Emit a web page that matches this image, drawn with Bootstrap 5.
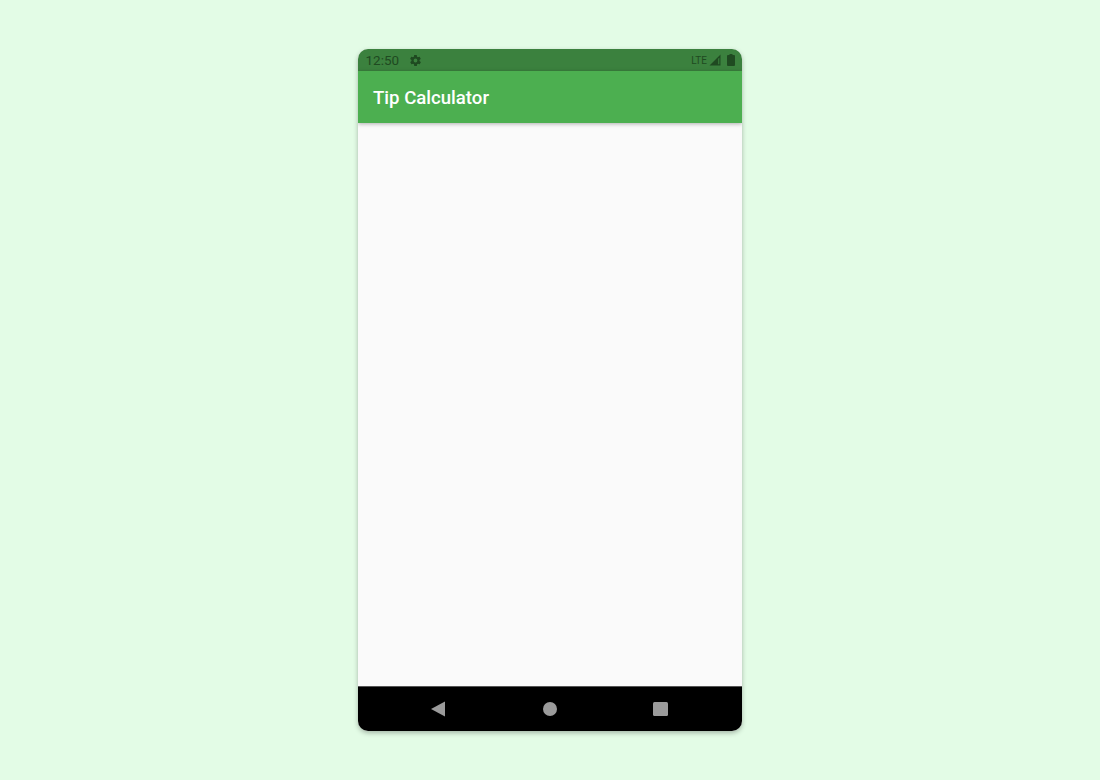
<!DOCTYPE html>
<html lang="en">
<head>
<meta charset="utf-8">
<title>Tip Calculator</title>
<link href="https://cdn.jsdelivr.net/npm/bootstrap@5.3.0/dist/css/bootstrap.min.css" rel="stylesheet">
<style>
html, body { height: 100%; }
body { background: #e3fce6; font-family: Roboto, "Liberation Sans", sans-serif; }
.stage { height: 780px; padding-top: 49px; }
.phone { width: 384px; height: 682px; border-radius: 10px; overflow: hidden; background: #fafafa; box-shadow: 0 2px 5px rgba(0,0,0,.28); }
.statusbar { height: 22px; background: #3b813e; color: #1f4a21; padding: 0 7px 0 7.5px; flex: none; }
.clock { font-size: 13.5px; line-height: 22px; margin-right: 10px; }
.lte { font-size: 10px; line-height: 22px; margin-right: 2px; padding-top: 1px; }
.sig { margin-right: 6px; }
.appbar { height: 52px; background: #4caf50; color: #fff; padding-left: 15px; padding-top: 3px; font-size: 18.6px; font-weight: 500; box-shadow: 0 1px 4px rgba(0,0,0,.3); flex: none; position: relative; }
.content { background: #fafafa; }
.navkeys { height: 45px; background: #000; border-top: 1px solid #555; flex: none; padding: 0 74px 0 72.5px; }
.homekey { margin-left: 2px; }
</style>
</head>
<body>
<div class="stage d-flex justify-content-center">
  <div class="phone d-flex flex-column">
    <div class="statusbar d-flex align-items-center">
      <span class="clock">12:50</span>
      <svg width="13" height="13" viewBox="0 0 24 24" fill="#1f4a21" aria-hidden="true"><path d="M19.4 13a7.5 7.5 0 0 0 0-2l2.1-1.6a.5.5 0 0 0 .1-.7l-2-3.4a.5.5 0 0 0-.6-.2l-2.5 1a7.3 7.3 0 0 0-1.7-1l-.4-2.7a.5.5 0 0 0-.5-.4h-4a.5.5 0 0 0-.5.4l-.4 2.7a7.3 7.3 0 0 0-1.7 1l-2.5-1a.5.5 0 0 0-.6.2l-2 3.4a.5.5 0 0 0 .1.7L4.6 11a7.5 7.5 0 0 0 0 2l-2.1 1.6a.5.5 0 0 0-.1.7l2 3.4c.1.2.4.3.6.2l2.5-1c.5.4 1.1.7 1.7 1l.4 2.7c0 .2.2.4.5.4h4c.3 0 .5-.2.5-.4l.4-2.7c.6-.3 1.2-.6 1.7-1l2.5 1c.2.1.5 0 .6-.2l2-3.4a.5.5 0 0 0-.1-.7zM12 15.5a3.5 3.5 0 1 1 0-7 3.5 3.5 0 0 1 0 7z"/></svg>
      <span class="lte ms-auto">LTE</span>
      <svg class="sig" width="12" height="12" viewBox="0 0 12 12" aria-hidden="true"><path d="M0.500 11.500 11.500 0.500V11.500ZM9.200 4.800V10.300H10.300V3.700Z" fill="#1f4a21" fill-rule="evenodd"/></svg>
      <svg width="8" height="12" viewBox="0 0 8 12" aria-hidden="true"><path d="M2.500 0h3v1H7a1 1 0 0 1 1 1v9a1 1 0 0 1-1 1H1a1 1 0 0 1-1-1V2a1 1 0 0 1 1-1h1.500z" fill="#1f4a21"/></svg>
    </div>
    <div class="appbar d-flex align-items-center">Tip Calculator</div>
    <div class="content flex-grow-1"></div>
    <div class="navkeys d-flex align-items-center justify-content-between">
      <svg width="14" height="16" viewBox="0 0 14 16" aria-hidden="true"><path d="M14 .5V15.500L0 8Z" fill="#9b9b9b"/></svg>
      <svg class="homekey" width="14" height="14" viewBox="0 0 14 14" aria-hidden="true"><circle cx="7" cy="7" r="7" fill="#9b9b9b"/></svg>
      <svg width="15" height="14" viewBox="0 0 15 14" aria-hidden="true"><rect width="15" height="14" rx="1.500" fill="#9b9b9b"/></svg>
    </div>
  </div>
</div>
<script src="https://cdn.jsdelivr.net/npm/bootstrap@5.3.0/dist/js/bootstrap.bundle.min.js"></script>
</body>
</html>
